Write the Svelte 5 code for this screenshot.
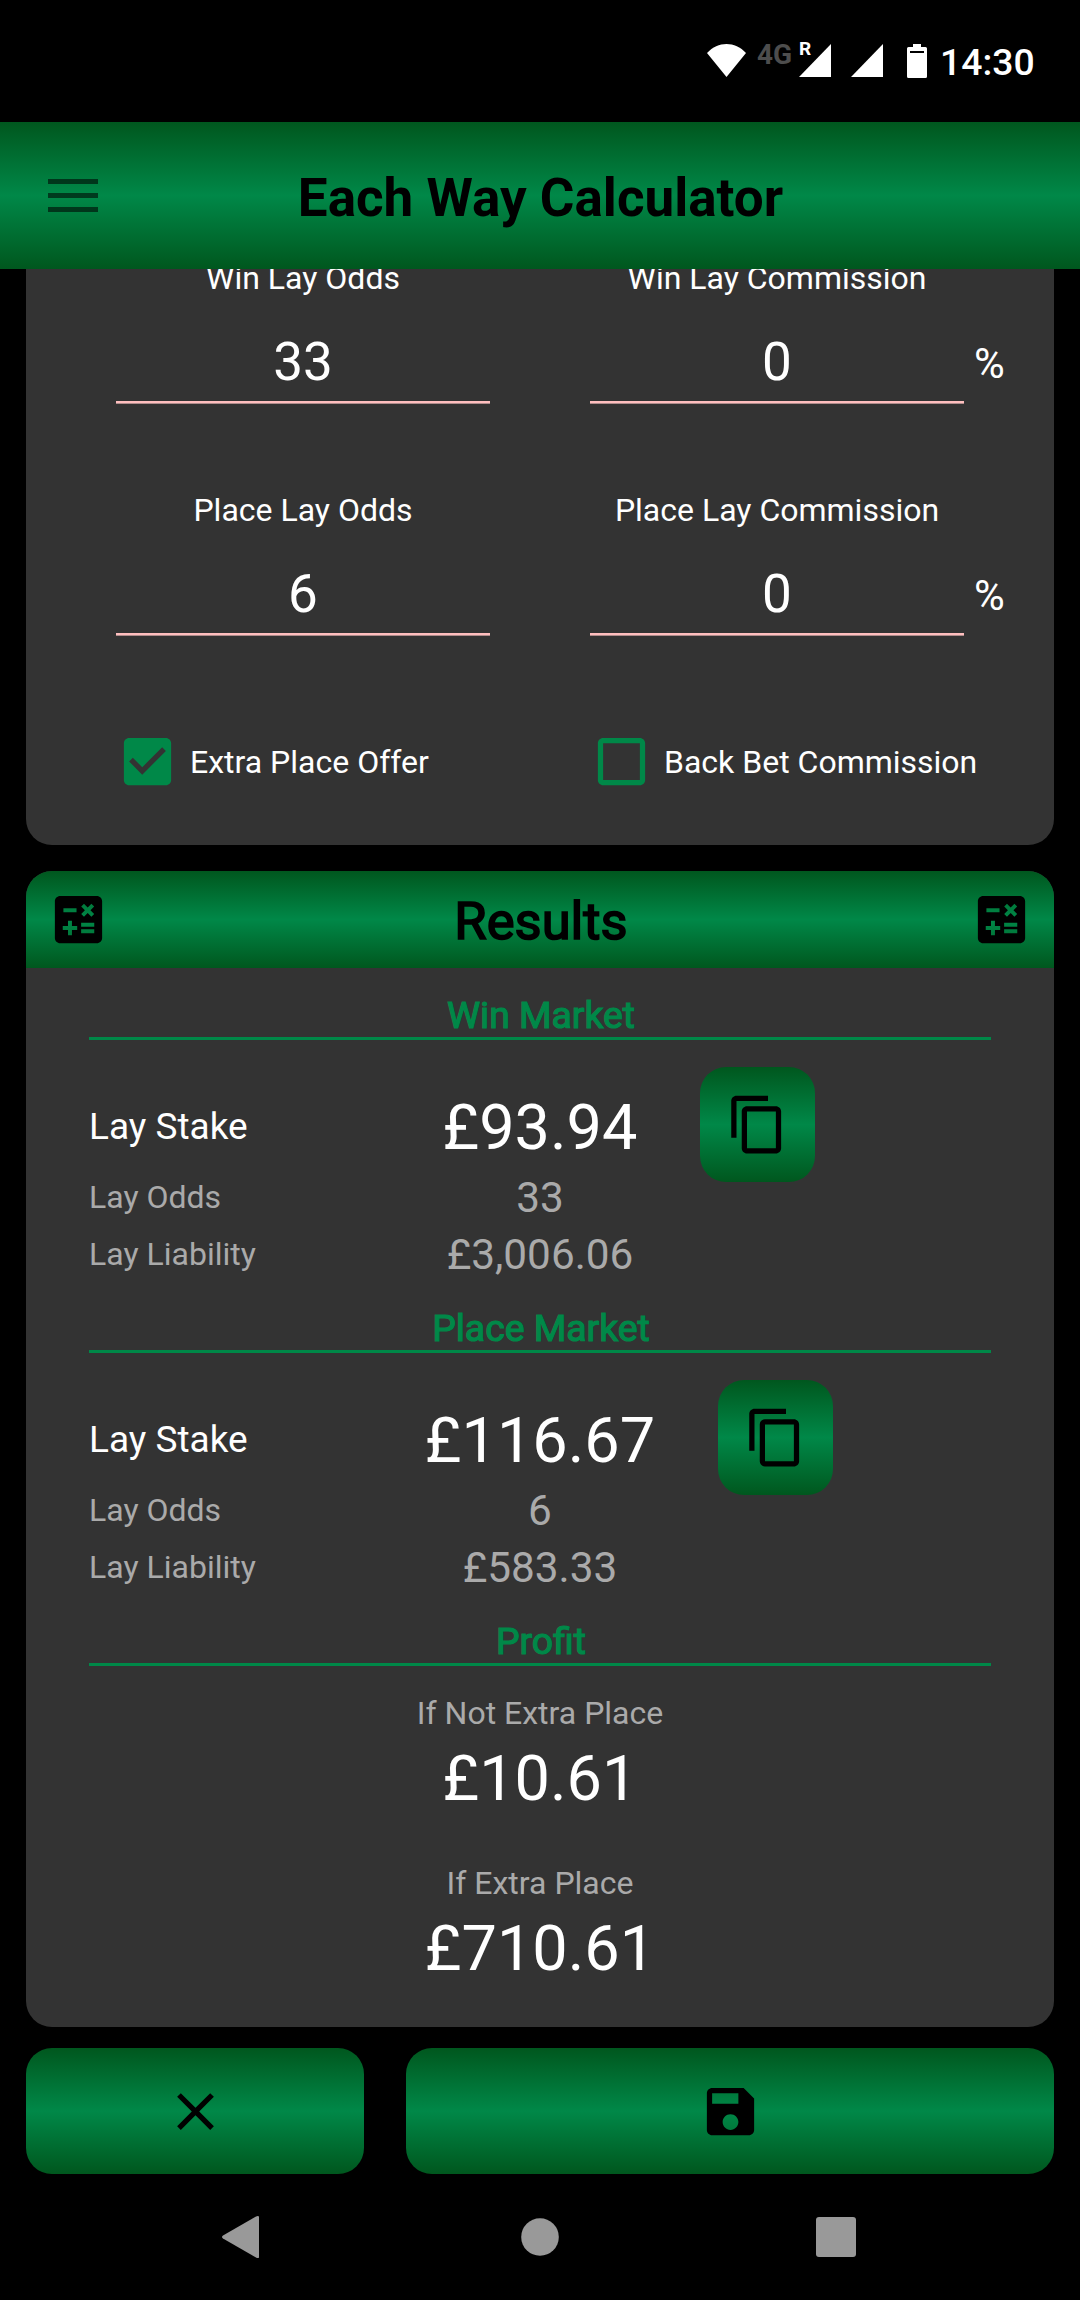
<script lang="ts">
    interface Market {
        title: string;
        stake: string;
        odds: string;
        liability: string;
    }

    const fields = [
        {label: "Win Lay Odds", value: "33", percent: false},
        {label: "Win Lay Commission", value: "0", percent: true},
        {label: "Place Lay Odds", value: "6", percent: false},
        {label: "Place Lay Commission", value: "0", percent: true},
    ];

    const markets: Market[] = [
        {title: "Win Market", stake: "£93.94", odds: "33", liability: "£3,006.06"},
        {title: "Place Market", stake: "£116.67", odds: "6", liability: "£583.33"},
    ];

    const profits = [
        {label: "If Not Extra Place", amount: "£10.61"},
        {label: "If Extra Place", amount: "£710.61"},
    ];

    let options = $state([
        {label: "Extra Place Offer", checked: true},
        {label: "Back Bet Commission", checked: false},
    ]);

    function copyStake(stake: string): void {
        navigator.clipboard?.writeText(stake.replace("£", ""));
    }
</script>

{#snippet calculatorIcon()}
    <svg class="icon" viewBox="0 0 24 24">
        <path fill-rule="evenodd" d="M19 3H5c-1.1 0-2 .9-2 2v14c0 1.1.9 2 2 2h14c1.1 0 2-.9 2-2V5c0-1.1-.9-2-2-2zm-5.97 4.06L14.09 6l1.41 1.41L16.91 6l1.06 1.06-1.41 1.41 1.41 1.41-1.06 1.06-1.41-1.4-1.41 1.41-1.06-1.06 1.41-1.41-1.41-1.42zm-6.78.66h5v1.5h-5v-1.5zM11.5 16h-2v2H8v-2H6v-1.5h2v-2h1.5v2h2V16zm6.5 1.25h-5v-1.5h5v1.5zm0-2.5h-5v-1.5h5v1.5z"/>
    </svg>
{/snippet}

<div class="screen">
    <div class="status-bar">
        <svg class="wifi" viewBox="0 0 39 33"><path d="M0 9C11-3 28-3 39 9L19.5 33z"/></svg>
        <span class="network">4G</span>
        <div class="roaming">
            <svg class="signal" viewBox="0 0 32 33"><path d="M32 0v33H0z"/></svg>
            <span>R</span>
        </div>
        <svg class="signal second" viewBox="0 0 32 33"><path d="M32 0v33H0z"/></svg>
        <svg class="battery" viewBox="0 0 20 34">
            <path fill-rule="evenodd" d="M6 0h8v3h4.5q1.5 0 1.5 1.5v28q0 1.5-1.5 1.5h-17Q0 34 0 32.5v-28Q0 3 1.5 3H6zM3 7v2h14V7z"/>
        </svg>
        <span class="clock">14:30</span>
    </div>

    <header>
        <button class="menu" aria-label="Menu">
            <i></i><i></i><i></i>
        </button>
        <h1>Each Way Calculator</h1>
    </header>

    <main>
        <section class="card inputs">
            <div class="fields">
                {#each fields as field}
                    <div class="field">
                        <span class="label">{field.label}</span>
                        <div class="entry">
                            <span class="value">{field.value}</span>
                            {#if field.percent}
                                <span class="percent">%</span>
                            {/if}
                        </div>
                    </div>
                {/each}
            </div>
            <div class="options">
                {#each options as option}
                    <button class="option" onclick={() => option.checked = !option.checked}>
                        <svg class="icon" viewBox="0 0 24 24">
                            {#if option.checked}
                                <path d="M19 3H5c-1.11 0-2 .9-2 2v14c0 1.1.89 2 2 2h14c1.11 0 2-.9 2-2V5c0-1.1-.89-2-2-2zm-9 14l-5-5 1.41-1.41L10 14.17l7.59-7.59L19 8l-9 9z"/>
                            {:else}
                                <path d="M19 5v14H5V5h14m0-2H5c-1.1 0-2 .9-2 2v14c0 1.1.9 2 2 2h14c1.1 0 2-.9 2-2V5c0-1.1-.9-2-2-2z"/>
                            {/if}
                        </svg>
                        <span>{option.label}</span>
                    </button>
                {/each}
            </div>
        </section>

        <section class="card results">
            <div class="results-head">
                {@render calculatorIcon()}
                <h2>Results</h2>
                {@render calculatorIcon()}
            </div>

            {#each markets as market}
                <h3>{market.title}</h3>
                <div class="row stake">
                    <span class="name">Lay Stake</span>
                    <span class="amount">{market.stake}</span>
                    <button class="copy" aria-label="Copy" onclick={() => copyStake(market.stake)}>
                        <svg class="icon" viewBox="0 0 24 24">
                            <path d="M16 1H4c-1.1 0-2 .9-2 2v14h2V3h12V1zm3 4H8c-1.1 0-2 .9-2 2v14c0 1.1.9 2 2 2h11c1.1 0 2-.9 2-2V7c0-1.1-.9-2-2-2zm0 16H8V7h11v14z"/>
                        </svg>
                    </button>
                </div>
                <div class="row minor">
                    <span class="name">Lay Odds</span>
                    <span class="amount">{market.odds}</span>
                </div>
                <div class="row minor">
                    <span class="name">Lay Liability</span>
                    <span class="amount">{market.liability}</span>
                </div>
            {/each}

            <h3>Profit</h3>
            {#each profits as profit}
                <div class="profit">
                    <span class="name">{profit.label}</span>
                    <span class="amount">{profit.amount}</span>
                </div>
            {/each}
        </section>
    </main>

    <div class="actions">
        <button class="clear" aria-label="Clear">
            <svg class="icon" viewBox="0 0 24 24">
                <path d="M19 6.41L17.59 5 12 10.59 6.41 5 5 6.41 10.59 12 5 17.59 6.41 19 12 13.41 17.59 19 19 17.59 13.41 12z"/>
            </svg>
        </button>
        <button class="save" aria-label="Save">
            <svg class="icon" viewBox="0 0 24 24">
                <path d="M17 3H5c-1.11 0-2 .9-2 2v14c0 1.1.89 2 2 2h14c1.1 0 2-.9 2-2V7l-4-4zm-5 16c-1.66 0-3-1.34-3-3s1.34-3 3-3 3 1.34 3 3-1.34 3-3 3zm3-10H5V5h10v4z"/>
            </svg>
        </button>
    </div>

    <nav>
        <svg viewBox="0 0 44 44"><path d="M40 1.5v41q-1 1-3 0L4 23.5q-2-1.5 0-3l33-19q2-1 3 0z"/></svg>
        <svg viewBox="0 0 44 44"><circle cx="23" cy="22" r="18.8"/></svg>
        <svg viewBox="0 0 44 44"><rect x="2" y="2" width="40" height="40" rx="3"/></svg>
    </nav>
</div>

<style>
    :global(body) {
        background: #000;
    }

    .screen {
        --green: #008848;
        --shine: linear-gradient(#00571e, #008848 50%, #00571e);

        display: flex;
        flex-direction: column;
        width: 1080px;
        height: 2300px;
        overflow: hidden;
        background: #000;
        color: #fff;
        font-family: Roboto, sans-serif;
        font-size: 32px;
    }

    button {
        display: flex;
        align-items: center;
        justify-content: center;
        margin: 0;
        padding: 0;
        border: 0;
        background: none;
        color: inherit;
        font: inherit;
    }

    h1, h2, h3 {
        margin: 0;
        font-weight: 400;
    }

    svg {
        display: block;
        flex: none;
        fill: currentColor;
    }

    .icon {
        width: 63px;
        height: 63px;
    }

    /* status bar */
    .status-bar {
        display: flex;
        align-items: flex-start;
        flex: none;
        box-sizing: border-box;
        height: 122px;
        padding: 44px 0 0 707px;
    }

    .wifi {
        width: 39px;
        height: 33px;
    }

    .network {
        width: 42px;
        margin: -5px 0 0 11px;
        color: #4d4d4d;
        font-size: 28px;
        font-weight: 700;
        line-height: 32px;
    }

    .roaming {
        position: relative;
    }

    .roaming span {
        position: absolute;
        top: -6px;
        left: 0;
        font-size: 19px;
        font-weight: 700;
        line-height: 22px;
    }

    .signal {
        width: 32px;
        height: 33px;
    }

    .second {
        margin-left: 20px;
    }

    .battery {
        width: 20px;
        height: 34px;
        margin-left: 24px;
    }

    .clock {
        margin: -4px 0 0 13px;
        font-size: 37.3px;
        font-weight: 500;
        line-height: 44px;
    }

    /* app bar */
    header {
        display: grid;
        grid-template-columns: 146px 1fr 145px;
        align-items: center;
        flex: none;
        height: 147px;
        background: var(--shine);
        color: #000;
    }

    .menu {
        flex-direction: column;
        gap: 9px;
        padding-bottom: 1px;
    }

    .menu i {
        width: 50px;
        height: 5px;
        background: rgba(0, 0, 0, 0.57);
    }

    h1 {
        padding-top: 4px;
        text-align: center;
        font-size: 53px;
        font-weight: 700;
        line-height: 62px;
    }

    /* inputs */
    main {
        flex: none;
        height: 1758px;
        overflow: hidden;
        padding: 0 26px;
    }

    .card {
        box-sizing: border-box;
        background: #333;
    }

    .inputs {
        display: flex;
        flex-direction: column;
        height: 576px;
        border-radius: 0 0 26px 26px;
    }

    /* the first row is partly scrolled under the app bar */
    .fields {
        display: grid;
        grid-template-columns: 374px 374px;
        grid-auto-rows: 232px;
        column-gap: 100px;
        padding-left: 90px;
        margin-top: -9px;
    }

    .label {
        display: block;
        text-align: center;
        line-height: 37px;
    }

    .entry {
        display: flex;
        margin-top: 34px;
    }

    .value {
        flex: none;
        width: 374px;
        height: 70px;
        border-bottom: 2px solid #ffbfbf;
        box-shadow: 0 1px #b08c8c;
        text-align: center;
        font-size: 53px;
        line-height: 62px;
    }

    .percent {
        margin: 8px 0 0 10px;
        font-size: 42px;
        line-height: 49px;
    }

    .options {
        display: grid;
        grid-template-columns: 374px auto;
        justify-content: start;
        column-gap: 100px;
        padding: 6px 0 0 90px;
    }

    .option {
        justify-content: flex-start;
        gap: 11px;
        white-space: nowrap;
        line-height: 37px;
    }

    .option span {
        padding-top: 1px;
    }

    .option .icon {
        fill: var(--green);
    }

    /* results */
    .results {
        height: 1156px;
        margin-top: 26px;
        border-radius: 26px;
        overflow: hidden;
    }

    .results-head {
        display: flex;
        align-items: center;
        justify-content: space-between;
        height: 97px;
        margin-bottom: 25px;
        padding: 0 21px;
        background: var(--shine);
        color: #000;
    }

    h2 {
        padding: 2px 0 0 2px;
        font-size: 52.5px;
        line-height: 62px;
        -webkit-text-stroke: 1.7px;
    }

    h3 {
        height: 44px;
        margin: 0 63px;
        border-bottom: 3px solid var(--green);
        color: var(--green);
        text-align: center;
        text-indent: 2px;
        font-size: 37.3px;
        line-height: 44px;
        -webkit-text-stroke: 1.2px;
    }

    .row {
        display: grid;
        grid-template-columns: 1fr auto 1fr;
        align-items: center;
        margin: 0 63px;
    }

    .stake {
        height: 115px;
        margin-top: 27px;
        margin-bottom: -14px;
    }

    .stake .name {
        padding-top: 4px;
        font-size: 37px;
    }

    .stake .amount {
        padding-top: 5px;
        font-size: 63px;
    }

    .copy {
        width: 115px;
        height: 115px;
        margin-left: 63px;
        border-radius: 26px;
        background: var(--shine);
        color: #000;
    }

    .minor {
        height: 57px;
        color: #aaa;
    }

    .minor .amount {
        padding-top: 2px;
        font-size: 42.3px;
    }

    .minor + h3 {
        margin-top: 24px;
    }

    .profit {
        display: flex;
        flex-direction: column;
        align-items: center;
        height: 170px;
    }

    h3 + .profit {
        margin-top: 29px;
    }

    .profit .name {
        color: #aaa;
        line-height: 37px;
    }

    .profit .amount {
        margin-top: 10px;
        font-size: 63px;
        line-height: 74px;
    }

    /* bottom buttons */
    .actions {
        display: flex;
        flex: none;
        gap: 42px;
        margin-top: 21px;
        padding: 0 26px;
    }

    .actions button {
        height: 126px;
        border-radius: 26px;
        background: var(--shine);
        color: #000;
    }

    .clear {
        width: 338px;
    }

    .save {
        flex: 1;
    }

    nav {
        display: flex;
        align-items: center;
        justify-content: space-between;
        flex: 1;
        padding: 0 222px 0 219px;
        color: #999;
    }

    nav svg {
        width: 44px;
        height: 44px;
    }
</style>
